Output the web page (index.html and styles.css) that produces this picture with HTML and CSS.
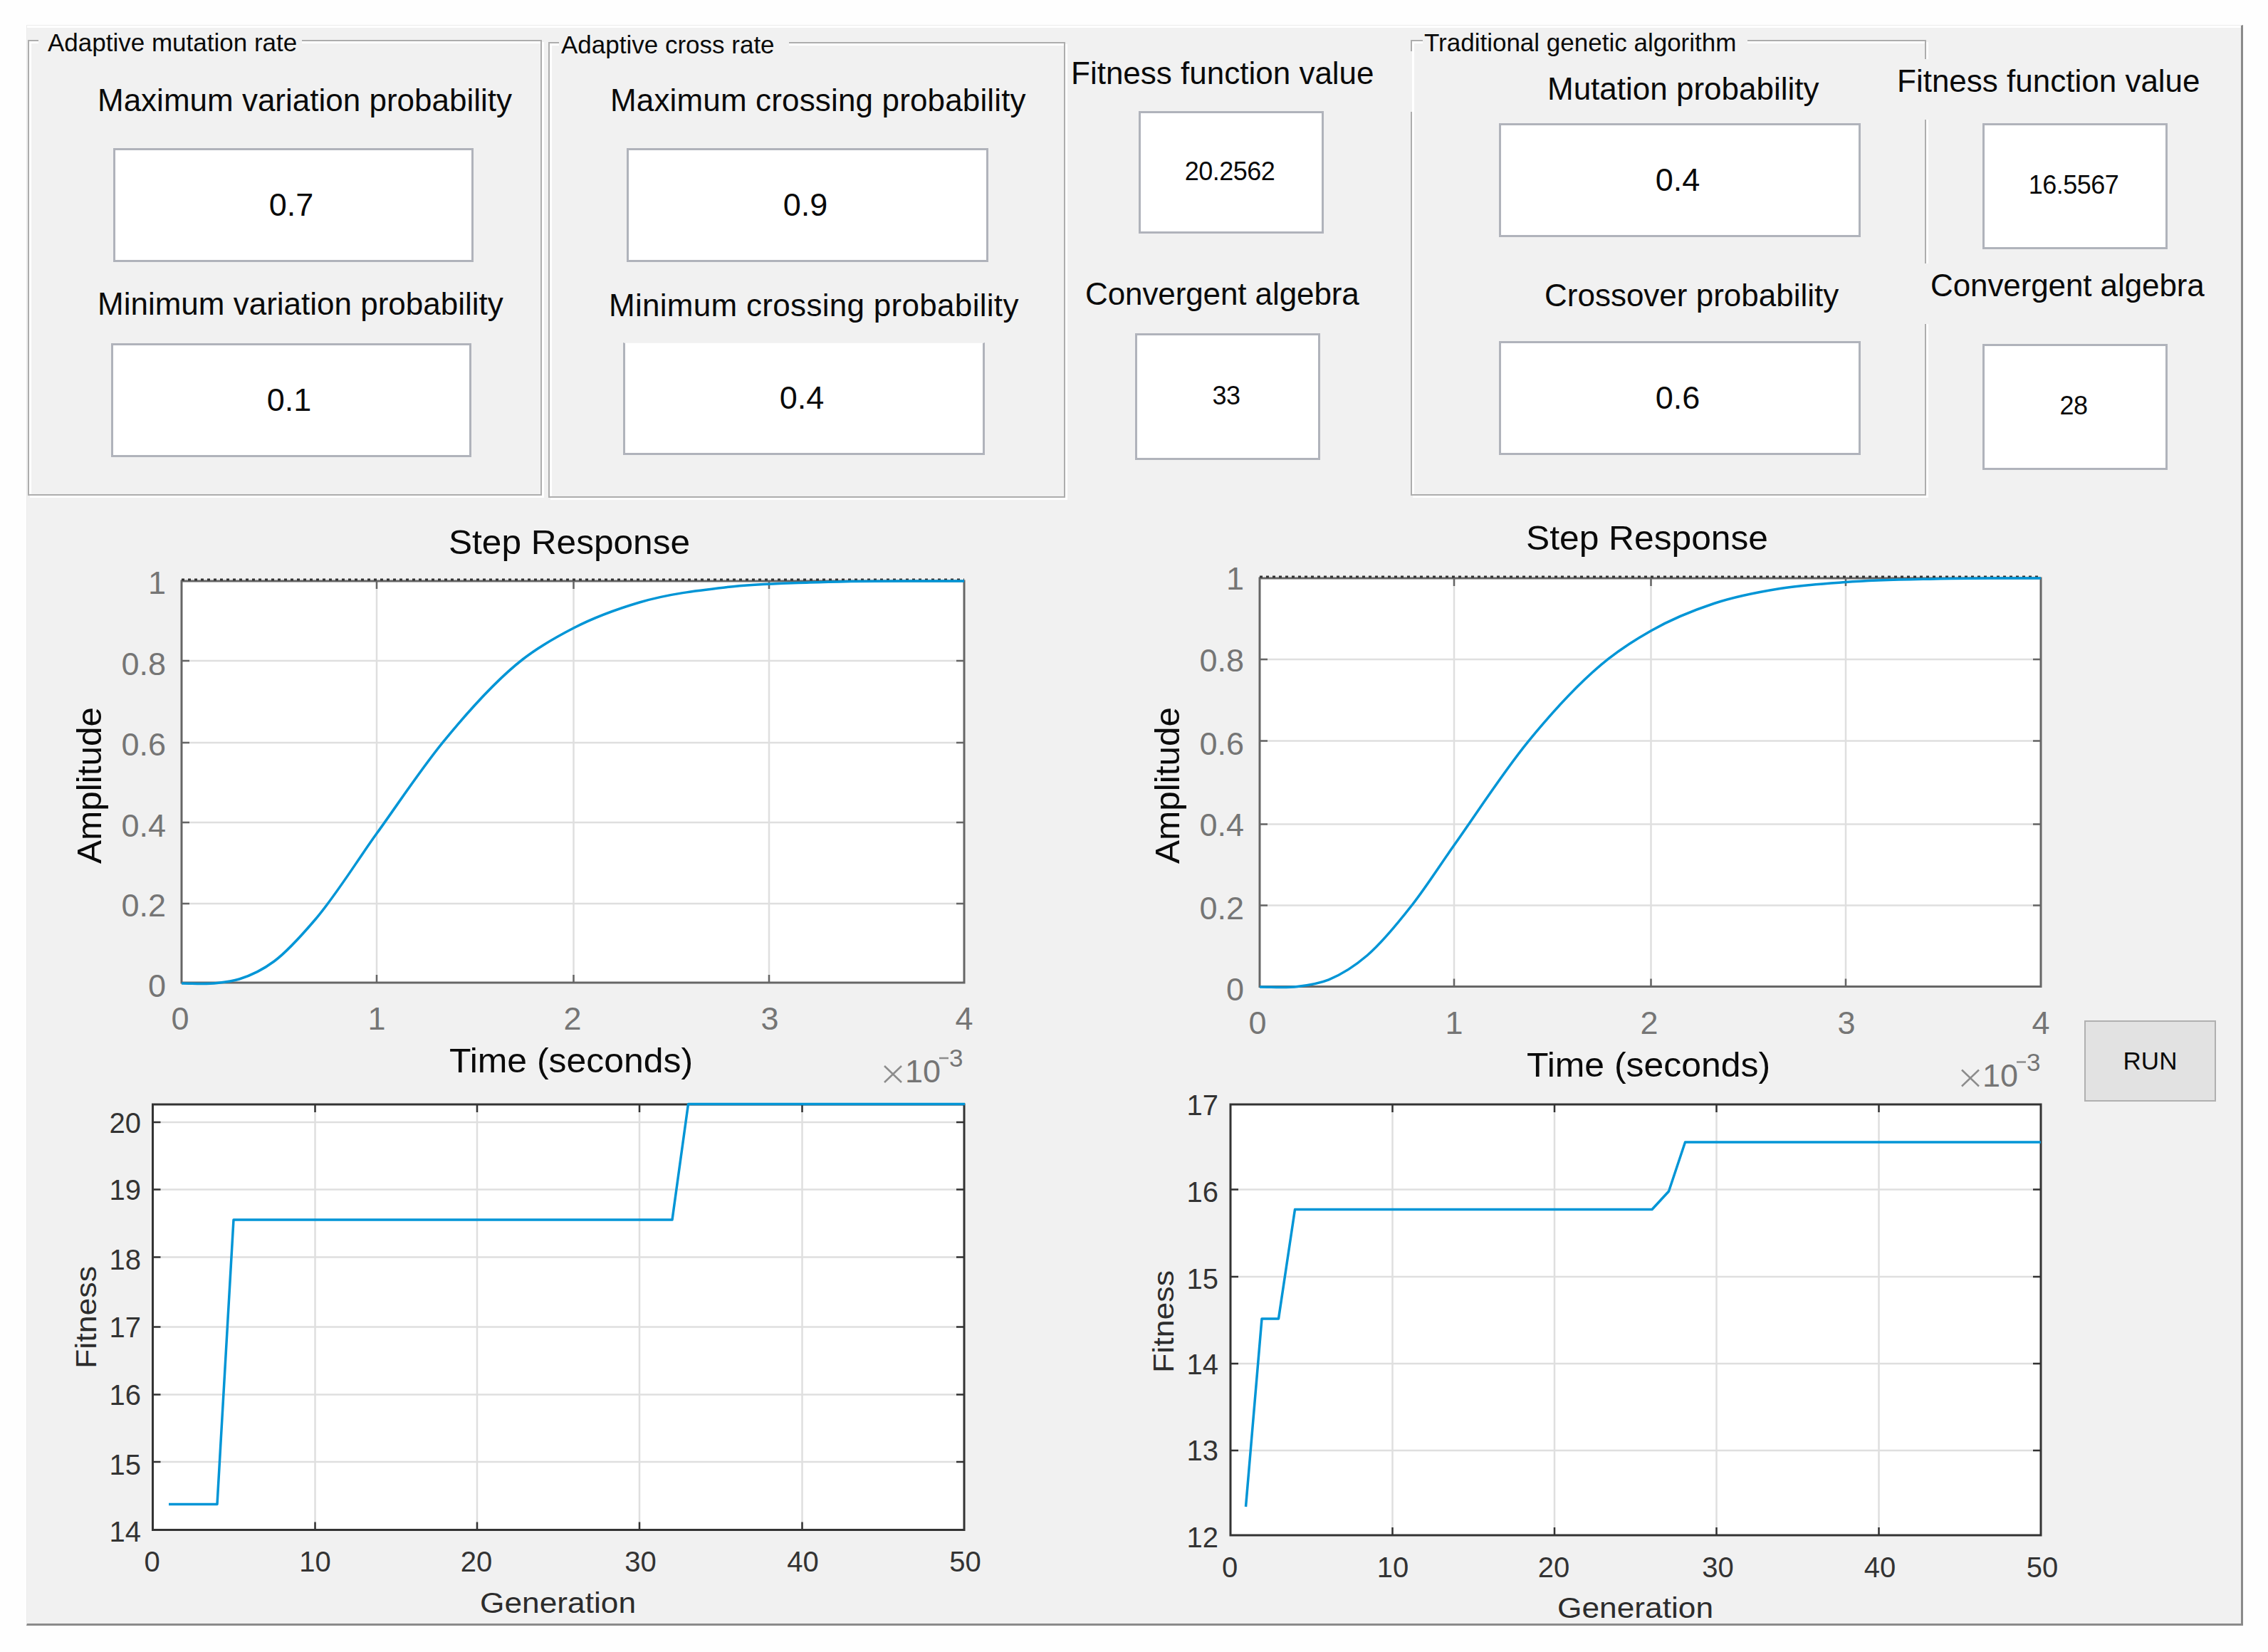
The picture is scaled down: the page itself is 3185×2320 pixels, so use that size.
FILE: index.html
```html
<!DOCTYPE html>
<html lang="en">
<head>
  <meta charset="UTF-8">
  <title>Genetic algorithm</title>
  <link rel="stylesheet" href="styles.css">
</head>
<body>

<div class="window">
  <div class="params">
    <div class="group mutation">
      <div class="legend">Adaptive mutation rate</div>
      <div class="label">Maximum variation probability</div>
      <div class="box">0.7</div>
      <div class="label second">Minimum variation probability</div>
      <div class="box last">0.1</div>
    </div>

    <div class="group cross">
      <div class="legend">Adaptive cross rate</div>
      <div class="label">Maximum crossing probability</div>
      <div class="box">0.9</div>
      <div class="label second">Minimum crossing probability</div>
      <div class="box last">0.4</div>
    </div>

    <div class="output adaptive">
      <div class="label">Fitness function value</div>
      <div class="box">20.2562</div>
      <div class="label second">Convergent algebra</div>
      <div class="box last">33</div>
    </div>

    <div class="group traditional">
      <div class="legend">Traditional genetic algorithm</div>
      <div class="label">Mutation probability</div>
      <div class="box">0.4</div>
      <div class="label second">Crossover probability</div>
      <div class="box last">0.6</div>
    </div>

    <div class="output classic">
      <div class="label">Fitness function value</div>
      <div class="box">16.5567</div>
      <div class="label second">Convergent algebra</div>
      <div class="box last">28</div>
    </div>
  </div>

  <div class="charts">
    <div class="column">
      <svg class="chart step" id="step1" width="1360" height="820" viewBox="60 720 1360 820"></svg>
      <svg class="chart fit" id="fit1" width="1360" height="738" viewBox="60 1540 1360 738"></svg>
    </div>
    <div class="column right">
      <svg class="chart step" id="step2" width="1300" height="820" viewBox="1600 720 1300 820"></svg>
      <svg class="chart fit" id="fit2" width="1300" height="738" viewBox="1600 1540 1300 738"></svg>
    </div>
    <button class="run">RUN</button>
  </div>
</div>

<script src="script.js"></script>
</body>
</html>
```
FILE: styles.css
```css
* {
  margin: 0;
  padding: 0;
  box-sizing: border-box;
}

body {
  background: #fefefe;
  font-family: "Liberation Sans", Arial, sans-serif;
  color: #0a0a0a;
  overflow: hidden;
}

.window {
  width: 3113px;
  height: 2248px;
  margin: 35px 0 0 37px;
  background: #f1f1f1;
  border: 1px solid #ececec;
  border-right: 3px solid #8a8a8a;
  border-bottom: 3px solid #8a8a8a;
  box-shadow: inset 0 3px 0 #fff;
}

.params {
  display: flex;
  align-items: flex-start;
  height: 684px;
}

/* etched frame */
.group {
  position: relative;
  height: 640px;
  border: 2px solid #adadad;
  box-shadow: 3px 3px 0 #fff, inset 3px 3px 0 #fff;
}

.legend {
  position: absolute;
  top: -18px;
  height: 44px;
  line-height: 39px;
  font-size: 35px;
  white-space: nowrap;
  background: #f1f1f1;
}

.label {
  height: 85px;
  line-height: 62px;
  font-size: 44px;
  white-space: nowrap;
}

.box {
  position: relative;
  display: flex;
  align-items: center;
  justify-content: center;
  width: 506px;
  height: 160px;
  padding: 0 6px 1px 0;
  background: #fff;
  border: 3px solid #b0b3bb;
  font-size: 45px;
}

.mutation {
  width: 722px;
  margin: 20px 0 0 1px;
}
.mutation .legend {
  left: 13px;
  width: 370px;
  padding-left: 13px;
}
.mutation .label { margin: 52px 0 0 96px; }
.mutation .box { margin: 13px 0 0 118px; }
.mutation .second { margin-top: 28px; }
.mutation .last { margin: 1px 0 0 115px; }

.cross {
  width: 726px;
  margin: 23px 0 0 9px;
}
.cross .legend {
  left: 13px;
  width: 323px;
  padding-left: 3px;
}
.cross .label {
  margin: 49px 0 0 85px;
  letter-spacing: 0.15px;
}
.cross .box {
  width: 508px;
  margin: 13px 0 0 108px;
}
.cross .second {
  margin: 30px 0 0 83px;
  letter-spacing: 0.3px;
}
.cross .last {
  height: 158px;
  margin: -2px 0 0 103px;
  border-top: 1px solid #f4f4f4;
}

.output .label {
  position: relative;
  z-index: 1;
  background: #f1f1f1;
}
.output .box {
  z-index: 2;
  width: 260px;
  height: 177px;
  padding: 0 4px 3px 0;
  font-size: 36px;
  letter-spacing: -0.5px;
}

.adaptive {
  width: 481px;
  margin: 0 -2px 0 6px;
}
.adaptive .label {
  margin-top: 36px;
  padding-left: 2px;
}
.adaptive .box {
  height: 172px;
  margin: -1px 0 0 97px;
}
.adaptive .second {
  margin-top: 54px;
  margin-right: 5px;
  padding-left: 22px;
  letter-spacing: -0.1px;
}
.adaptive .last {
  height: 178px;
  margin: 1px 0 0 92px;
}

.traditional {
  width: 724px;
  margin-top: 20px;
}
.traditional .legend {
  left: 15px;
  width: 456px;
  padding-left: 2px;
}
.traditional .label { margin: 36px 0 0 190px; }
.traditional .box {
  width: 508px;
  margin: -6px 0 0 122px;
}
.traditional .second { margin: 51px 0 0 186px; }
.traditional .last { margin-top: 10px; }

.classic {
  width: 440px;
  margin-left: -42px;
}
.classic .label {
  margin-top: 47px;
  padding-left: 1px;
}
.classic .box { margin: 5px 0 0 121px; }
.classic .second {
  margin: 20px 0 0 37px;
  padding-left: 11px;
  letter-spacing: -0.1px;
}
.classic .last { margin-top: 28px; }

.charts {
  display: flex;
  align-items: flex-start;
  padding-left: 22px;
}

.column {
  display: flex;
  flex-direction: column;
}

.column.right {
  margin-left: 180px;
}

.chart {
  display: block;
  overflow: visible;
}

.area { fill: #fff; }
.grid { stroke: #dfdfdf; stroke-width: 2.5; }
.frame { fill: none; stroke-width: 3; }
.tick { stroke-width: 2.5; }
.line { fill: none; stroke: #0095d6; stroke-width: 3.5; stroke-linejoin: round; }
.dots { stroke: #333; stroke-width: 3; stroke-dasharray: 4 5; }
.title { font-size: 48px; fill: #0a0a0a; }

.step .frame, .step .tick { stroke: #666; }
.step .num { font-size: 45px; fill: #757575; }
.step .exp { font-size: 35px; fill: #757575; }
.step .times { stroke: #8c8c8c; stroke-width: 2.5; }

.fit .frame, .fit .tick { stroke: #333; }
.fit .num { font-size: 40px; fill: #333; }
.fit .title { font-size: 41px; fill: #2c2c2c; }

.run {
  width: 185px;
  height: 114px;
  margin: 713px 0 0 27px;
  padding-bottom: 0;
  background: #e2e2e2;
  border: 2px solid #b0b0b0;
  font-family: inherit;
  font-size: 35px;
  color: #0a0a0a;
}
```
FILE: script.js
```js
// pixel positions of ticks: first and last entries are the frame edges
const charts = {
  step1: {
    x: [255, 529, 805.5, 1080, 1354], y: [1380, 1269, 1155, 1043, 928, 816],
    xLabels: ['0', '1', '2', '3', '4'], xText: [253, 529, 804, 1081, 1354], xBase: 1446,
    yLabels: ['0', '0.2', '0.4', '0.6', '0.8', '1'], yBase: [1400, 1287, 1175, 1061, 948, 834], yRight: 233,
    titles: [['Step Response', 630, 778, 339], ['Time (seconds)', 631, 1506, 342]],
    side: ['Amplitude', 142, 1213, 220], dots: true, exp: [1242, 1520],
    curve: [[255, 1381], [305, 1380.5], [336, 1375], [385, 1350], [443, 1291], [529, 1170.6], [622, 1042.4],
      [734, 926], [805.5, 882], [898, 846], [1021, 824.6], [1137, 818], [1354, 816]]
  },
  step2: {
    x: [1769, 2042, 2318.5, 2592, 2866], y: [1385.5, 1271.5, 1157.5, 1040.5, 926, 812],
    xLabels: ['0', '1', '2', '3', '4'], xText: [1766, 2042, 2316, 2593, 2866], xBase: 1452,
    yLabels: ['0', '0.2', '0.4', '0.6', '0.8', '1'], yBase: [1405, 1291, 1174, 1060, 943, 828], yRight: 1747,
    titles: [['Step Response', 2143, 772, 340], ['Time (seconds)', 2144, 1512, 342]],
    side: ['Amplitude', 1656, 1213, 220], dots: true, exp: [2755, 1525.5],
    curve: [[1769, 1386], [1822, 1385.5], [1866, 1375.8], [1919.7, 1342], [1983, 1271], [2042, 1187], [2146.7, 1040.6],
      [2258.5, 925.4], [2318.7, 885.7], [2407, 847.5], [2500, 826.5], [2592, 817.5], [2717.7, 813], [2866, 812]]
  },
  fit1: {
    x: [214.5, 442.5, 670, 898, 1126.5, 1354], y: [2148.5, 2053, 1958.5, 1863.5, 1765.5, 1670.5, 1576, 1551],
    xLabels: ['0', '10', '20', '30', '40', '50'], xText: [213.5, 442.5, 669, 899.5, 1127.5, 1355.5], xBase: 2207,
    yLabels: ['14', '15', '16', '17', '18', '19', '20'], yBase: [2165, 2070.5, 1973, 1877.5, 1783, 1685, 1590.5], yRight: 198,
    titles: [['Generation', 674, 2265, 219]],
    side: ['Fitness', 134.5, 1922, 144],
    lines: '237,2112.5 305,2112.5 328,1713 944,1713 966.5,1550.5 1355,1550.5'
  },
  fit2: {
    x: [1728, 1955.5, 2183, 2410.5, 2638.5, 2866], y: [2156, 2037, 1915, 1793, 1670.5, 1551],
    xLabels: ['0', '10', '20', '30', '40', '50'], xText: [1727, 1956, 2182, 2412.5, 2640, 2868], xBase: 2215,
    yLabels: ['12', '13', '14', '15', '16', '17'], yBase: [2173, 2051, 1929.5, 1810, 1688, 1566], yRight: 1711,
    titles: [['Generation', 2187, 2271.5, 219]],
    side: ['Fitness', 1648, 1928, 144],
    lines: '1749.5,2116 1772,1852 1795.5,1852 1818.5,1698.5 2320,1698.5 2343.5,1673 2366.5,1604 2866,1604'
  }
};

function line(cls, x1, y1, x2, y2) {
  return `<line class="${cls}" x1="${x1}" y1="${y1}" x2="${x2}" y2="${y2}"/>`;
}

// slope at point i, weighted by the distance to its neighbours
function slope(p, i) {
  if (i === 0 || i === p.length - 1) return 0;
  const h1 = p[i][0] - p[i - 1][0], h2 = p[i + 1][0] - p[i][0];
  const s1 = (p[i][1] - p[i - 1][1]) / h1, s2 = (p[i + 1][1] - p[i][1]) / h2;
  return (s1 * h2 + s2 * h1) / (h1 + h2);
}

// smooth path through the sample points
function smooth(p) {
  let d = `M${p[0]}`;
  for (let i = 0; i < p.length - 1; i++) {
    const b = p[i], c = p[i + 1];
    const h = (c[0] - b[0]) / 3;
    d += ` C${b[0] + h},${b[1] + slope(p, i) * h} ${c[0] - h},${c[1] - slope(p, i + 1) * h} ${c}`;
  }
  return d;
}

function draw(id, c) {
  const left = c.x[0], right = c.x[c.x.length - 1];
  const bottom = c.y[0], top = c.y[c.y.length - 1];
  const box = `x="${left}" y="${top}" width="${right - left}" height="${bottom - top}"`;
  const fitText = 'lengthAdjust="spacingAndGlyphs"';
  let out = `<rect class="area" ${box}/>`;

  c.x.slice(1, -1).forEach(x => {
    out += line('grid', x, top, x, bottom) + line('tick', x, top, x, top + 11) + line('tick', x, bottom, x, bottom - 11);
  });
  c.y.slice(1, -1).forEach(y => {
    out += line('grid', left, y, right, y) + line('tick', left, y, left + 11, y) + line('tick', right, y, right - 11, y);
  });
  out += `<rect class="frame" ${box}/>`;
  if (c.dots) out += line('dots', left, top - 2, right, top - 2);
  out += c.curve ? `<path class="line" d="${smooth(c.curve)}"/>` : `<polyline class="line" points="${c.lines}"/>`;

  c.xLabels.forEach((t, i) => {
    out += `<text class="num" text-anchor="middle" x="${c.xText[i]}" y="${c.xBase}">${t}</text>`;
  });
  c.yLabels.forEach((t, i) => {
    out += `<text class="num" text-anchor="end" x="${c.yRight}" y="${c.yBase[i]}">${t}</text>`;
  });
  c.titles.forEach(([t, x, y, w]) => {
    out += `<text class="title" x="${x}" y="${y}" textLength="${w}" ${fitText}>${t}</text>`;
  });
  const [t, x, y, w] = c.side;
  out += `<text class="title" transform="translate(${x} ${y}) rotate(-90)" textLength="${w}" ${fitText}>${t}</text>`;

  if (c.exp) {
    const [ex, ey] = c.exp;
    out += line('times', ex, ey, ex + 24, ey - 23) + line('times', ex, ey - 23, ex + 24, ey);
    out += `<text class="num" x="${ex + 29}" y="${ey}">10</text>`;
    out += line('times', ex + 77, ey - 34, ex + 90, ey - 34);
    out += `<text class="exp" x="${ex + 91}" y="${ey - 22}">3</text>`;
  }
  document.getElementById(id).innerHTML = out;
}

for (const id in charts) draw(id, charts[id]);
```
